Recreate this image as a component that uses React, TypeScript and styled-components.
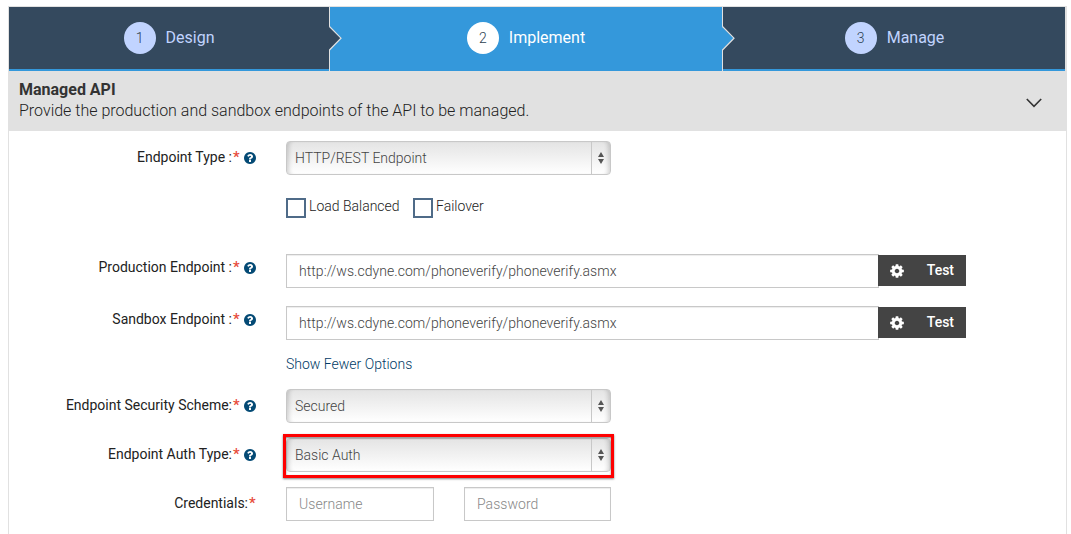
import React from 'react';
import styled, { createGlobalStyle } from 'styled-components';

const GlobalStyle = createGlobalStyle`
  *, *::before, *::after { box-sizing: border-box; }
  html, body { margin: 0; padding: 0; background: #fff; }
  body {
    height: 534px;
    overflow: hidden;
    font-family: Roboto, 'Liberation Sans', sans-serif;
    font-size: 14px;
    font-weight: 300;
    line-height: 20px;
    color: #222;
  }
`;

const Page = styled.main`
  height: 534px;
  padding: 6px 4px 0 8px;
  overflow: hidden;
`;

const Wizard = styled.section`
  height: 600px;
  border: 1px solid #e1e1e1;
`;

const Steps = styled.nav`
  display: flex;
  height: 64px;
`;

const Step = styled.div<{ $width: number; $active?: boolean }>`
  position: relative;
  display: flex;
  flex: 0 0 ${(p) => p.$width}px;
  align-items: flex-start;
  justify-content: center;
  padding-top: 15px;
  gap: 10px;
  font-size: 16px;
  line-height: 32px;
  font-weight: 400;
  color: ${(p) => (p.$active ? '#fff' : '#c1d4ff')};
  background: ${(p) => (p.$active ? '#3498db' : '#34495e')};
  border-right: 1px solid #e1e1e1;
  box-shadow: ${(p) => (p.$active ? 'none' : 'inset 0 -2px 0 #3498db')};

  &:last-child { padding-left: 1px; }
`;

const StepNumber = styled.span<{ $active?: boolean }>`
  width: 32px;
  height: 32px;
  border-radius: 50%;
  text-align: center;
  font-size: 14px;
  font-weight: 300;
  color: #2c3e50;
  background: ${(p) => (p.$active ? '#fff' : '#c1d4ff')};
`;

const StepName = styled.span`
  line-height: 31px;
`;

const StepArrow = styled.svg`
  position: absolute;
  z-index: 1;
  top: 18px;
  right: -14px;
  width: 14px;
  height: 26px;
`;

const SectionHeader = styled.header`
  display: flex;
  align-items: center;
  justify-content: space-between;
  height: 60px;
  padding: 0 24px 2px 10px;
  background: #e1e1e1;
  font-size: 16px;
  line-height: 21px;
`;

const SectionTitle = styled.h2`
  margin: 0;
  font-size: 16px;
  font-weight: 700;
  color: #333;
`;

const SectionText = styled.p`
  margin: 0;
`;

const Chevron = styled.svg`
  width: 16px;
  height: 10px;
  margin-top: 5px;
`;

const Form = styled.form`
  padding-top: 10px;
`;

const Row = styled.div<{ $gap: number }>`
  display: flex;
  align-items: flex-start;
  margin-bottom: ${(p) => p.$gap}px;
`;

const Label = styled.label<{ $height: number }>`
  display: flex;
  flex: 0 0 247px;
  justify-content: flex-end;
  align-items: center;
  height: ${(p) => p.$height}px;
  margin-right: 30px;
  font-weight: 400;
  color: #222;
  white-space: pre;
`;

const Required = styled.span`
  width: 7px;
  margin-left: 1px;
  font-size: 15px;
  font-weight: 500;
  color: #e74c3c;
`;

const HelpIcon = styled.svg`
  width: 14px;
  height: 14px;
  margin: 1px -1px 0 3px;
  fill: #044a75;
`;

const SelectBox = styled.div`
  position: relative;
  display: flex;
  justify-content: space-between;
  width: 325px;
  height: 34px;
  padding-left: 8px;
  border: 1px solid #c8c8c8;
  border-radius: 4px;
  line-height: 32px;
  color: #444;
  background: linear-gradient(#e4e4e4, #fff);
  box-shadow: inset 5px 0 4px -3px rgba(0, 0, 0, 0.16), inset -5px 0 4px -3px rgba(0, 0, 0, 0.16);
`;

const SelectArrows = styled.span`
  display: flex;
  align-items: center;
  justify-content: center;
  width: 19px;
  border-left: 1px solid #c8c8c8;
`;

const Highlight = styled.span`
  position: absolute;
  inset: -5px -4px -7px -4px;
  border: 3px solid #fe0000;
  box-shadow: 0 1px 2px rgba(0, 0, 0, 0.5), inset 0 1px 2px rgba(0, 0, 0, 0.5);
`;

const CheckItem = styled.label`
  display: flex;
  gap: 3px;
  margin-right: 13.4px;
  line-height: 17px;
`;

const CheckBox = styled.span`
  width: 20px;
  height: 20px;
  border: 2px solid #4f6b88;
  background: #fff;
`;

const Checks = styled.div`
  display: flex;
  padding-left: 277px;
  margin-bottom: 36px;
`;

const Input = styled.input<{ $width: number }>`
  width: ${(p) => p.$width}px;
  height: 34px;
  margin: 0;
  padding: 0 12px;
  border: 1px solid #c8c8c8;
  border-radius: 0;
  outline: none;
  font: inherit;
  letter-spacing: 0.045px;
  color: #444;
  background: #fff;
  box-shadow: inset 0 1px 1px rgba(0, 0, 0, 0.075);
  &::placeholder { color: #888; opacity: 1; }
`;

const TestButton = styled.button`
  display: flex;
  align-items: center;
  justify-content: space-between;
  width: 88px;
  height: 31px;
  margin: 1px 0 0 -1px;
  padding: 0 12px 1px;
  border: 0;
  background: #444;
  color: #fff;
  font: 500 14px/30px Roboto, 'Liberation Sans', sans-serif;
`;

const GearIcon = styled.svg`
  width: 16px;
  height: 16px;
  margin: 2px 0 0 -1px;
  fill: #fff;
`;

const OptionsLink = styled.a`
  display: block;
  height: 20px;
  margin: 14px 0 15px 277px;
  color: #003a66;
`;

const Credentials = styled.div`
  display: flex;
  gap: 30px;
`;

function Help() {
  return (
    <HelpIcon viewBox="0 0 1792 1792">
      <path d="M1024 1376v-192q0-14-9-23t-23-9h-192q-14 0-23 9t-9 23v192q0 14 9 23t23 9h192q14 0 23-9t9-23zm256-672q0-88-55.5-163t-138.5-116-170-41q-243 0-371 213-15 24 8 42l132 100q7 6 19 6 16 0 25-12 53-68 86-92 34-24 86-24 48 0 85.5 26t37.5 59q0 38-20 61t-68 45q-63 28-115.5 86.5t-52.5 125.5v36q0 14 9 23t23 9h192q14 0 23-9t9-23q0-19 21.5-49.5t54.5-49.5q32-18 49-28.5t46-35 44.5-48 28-60.5 12.5-81zm384 192q0 209-103 385.5t-279.5 279.5-385.5 103-385.5-103-279.5-279.5-103-385.5 103-385.5 279.5-279.5 385.5-103 385.5 103 279.5 279.5 103 385.5z" />
    </HelpIcon>
  );
}

function Gear() {
  return (
    <GearIcon viewBox="0 0 1792 1792">
      <path d="M1152 896q0-106-75-181t-181-75-181 75-75 181 75 181 181 75 181-75 75-181zm512-109v222q0 12-8 23t-20 13l-185 28q-19 54-39 91 35 50 107 138 10 12 10 25t-9 23q-27 37-99 108t-94 71q-12 0-26-9l-138-108q-44 23-91 38-16 136-29 186-7 28-36 28h-222q-14 0-24.5-8.5t-11.5-21.5l-28-184q-49-16-90-37l-141 107q-10 9-25 9-14 0-25-11-126-114-165-168-7-10-7-23 0-12 8-23 15-21 51-66.5t54-70.5q-27-50-41-99l-183-27q-13-2-21-12.5t-8-23.5v-222q0-12 8-23t19-13l186-28q14-46 39-92-40-57-107-138-10-12-10-24 0-10 9-23 26-36 98.5-107.5t94.5-71.5q13 0 26 10l138 107q44-23 91-38 16-136 29-186 7-28 36-28h222q14 0 24.5 8.5t11.5 21.5l28 184q49 16 90 37l142-107q9-9 24-9 13 0 25 10 129 119 165 170 7 8 7 22 0 12-8 23-15 21-51 66.5t-54 70.5q26 50 41 98l183 28q13 2 21 12.5t8 23.5z" />
    </GearIcon>
  );
}

function Arrow({ fill }: { fill: string }) {
  return (
    <StepArrow viewBox="0 0 14 26">
      <path d="M0 1.5 L12 13.2 L0 25" fill={fill} />
      <path d="M0.5 1.5 L12 13.2 L0.5 25" fill="none" stroke="#e1e1e1" strokeWidth="1.2" />
    </StepArrow>
  );
}

function FieldLabel({ text, help = true, height = 32 }: { text: string; help?: boolean; height?: number }) {
  return (
    <Label $height={height}>
      {text}
      <Required>*</Required>
      {help && <Help />}
    </Label>
  );
}

function Select({ value, highlighted }: { value: string; highlighted?: boolean }) {
  return (
    <SelectBox>
      {value}
      <SelectArrows>
        <svg width="6" height="14" viewBox="0 0 6 14">
          <path d="M3 1 L6 6 H0 Z M0 8 H6 L3 13 Z" fill="#555" />
        </svg>
      </SelectArrows>
      {highlighted && <Highlight />}
    </SelectBox>
  );
}

function Endpoint({ label, gap }: { label: string; gap: number }) {
  return (
    <Row $gap={gap}>
      <FieldLabel text={label} height={26} />
      <Input $width={593} defaultValue="http://ws.cdyne.com/phoneverify/phoneverify.asmx" />
      <TestButton type="button">
        <Gear />
        Test
      </TestButton>
    </Row>
  );
}

export default function App() {
  return (
    <Page>
      <GlobalStyle />
      <Wizard>
        <Steps>
          <Step $width={321}>
            <StepNumber>1</StepNumber>
            <StepName>Design</StepName>
            <Arrow fill="#34495e" />
          </Step>
          <Step $width={393} $active>
            <StepNumber $active>2</StepNumber>
            <StepName>Implement</StepName>
            <Arrow fill="#3498db" />
          </Step>
          <Step $width={343}>
            <StepNumber>3</StepNumber>
            <StepName>Manage</StepName>
          </Step>
        </Steps>
        <SectionHeader>
          <div>
            <SectionTitle>Managed API</SectionTitle>
            <SectionText>Provide the production and sandbox endpoints of the API to be managed.</SectionText>
          </div>
          <Chevron viewBox="0 0 16 10">
            <path d="M0.8 1 L8 8.3 L15.2 1" fill="none" stroke="#333" strokeWidth="1.6" />
          </Chevron>
        </SectionHeader>
        <Form>
          <Row $gap={23}>
            <FieldLabel text="Endpoint Type :" />
            <Select value="HTTP/REST Endpoint" />
          </Row>
          <Checks>
            <CheckItem>
              <CheckBox />
              Load Balanced
            </CheckItem>
            <CheckItem>
              <CheckBox />
              Failover
            </CheckItem>
          </Checks>
          <Endpoint label="Production Endpoint :" gap={18} />
          <Endpoint label="Sandbox Endpoint :" gap={0} />
          <OptionsLink>Show Fewer Options</OptionsLink>
          <Row $gap={15}>
            <FieldLabel text="Endpoint Security Scheme:" />
            <Select value="Secured" />
          </Row>
          <Row $gap={15}>
            <FieldLabel text="Endpoint Auth Type:" />
            <Select value="Basic Auth" highlighted />
          </Row>
          <Row $gap={0}>
            <FieldLabel text="Credentials:" help={false} />
            <Credentials>
              <Input $width={148} placeholder="Username" />
              <Input $width={147} placeholder="Password" />
            </Credentials>
          </Row>
        </Form>
      </Wizard>
    </Page>
  );
}
